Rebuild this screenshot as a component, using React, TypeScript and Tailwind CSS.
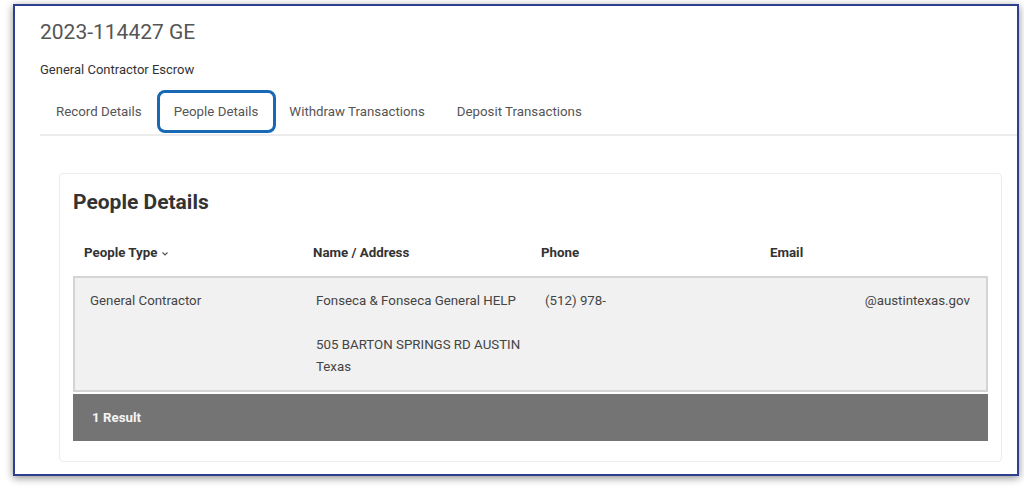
import React from 'react';

const tabs = ['Record Details', 'People Details', 'Withdraw Transactions', 'Deposit Transactions'];

export default function App() {
  return (
    <div className="w-[1024px] h-[488px] bg-white pt-[4px] pl-[13px] font-['Roboto',_'Liberation_Sans',_sans-serif]">
      {/* Framed screenshot */}
      <div className="w-[1006px] h-[472px] border-2 border-[#2e3f8f] bg-white shadow-[0_2px_8px_rgba(0,0,0,0.45)] flex flex-col">
        <div className="pl-[25px] pt-[12px]">
          <h1 className="text-[21px] leading-[28px] text-[#555] font-normal">2023-114427 GE</h1>
          <p className="mt-[16px] text-[13px] leading-[16px] text-[#333]">General Contractor Escrow</p>
        </div>

        {/* Tabs */}
        <div className="ml-[25px] mt-[10px] flex border-b-2 border-[#ececec] h-[48px] items-center pt-[2px]">
          {tabs.map((t, i) => (
            <div key={t} className={`relative h-full flex items-center text-[13.3px] text-[#555] ${i === 1 ? 'pl-[16px] pr-[15px]' : 'px-[16px]'}`}>
              {t}
              {i === 1 && (
                <div className="absolute left-[-1px] right-[-3px] top-[0px] bottom-[1px] border-[3px] border-[#1768b5] rounded-[8px]" />
              )}
            </div>
          ))}
        </div>

        {/* Card */}
        <div className="ml-[44px] mr-[15px] mt-[37px] border border-[#ececec] rounded-[4px] px-[13px] pb-[20px]">
          <h2 className="pt-[14px] text-[21px] leading-[28px] font-bold text-[#333]">People Details</h2>

          <div className="mt-[25px] grid grid-cols-[229px_228px_229px_1fr] pl-[11px] text-[13.3px] font-bold text-[#333] h-[24px] items-center">
            <div className="flex items-center gap-[4px]">
              People Type
              <svg width="8" height="6" viewBox="0 0 8 6" className="mt-[1px]">
                <path d="M1.5 1.5 L4 4 L6.5 1.5" fill="none" stroke="#555" strokeWidth="1.2" />
              </svg>
            </div>
            <div>Name / Address</div>
            <div>Phone</div>
            <div>Email</div>
          </div>

          <div className="mt-[11px] border-2 border-[#d4d4d4] bg-[#f1f1f1] grid grid-cols-[226px_229px_230px_1fr] pl-[15px] pr-[16px] pt-[12px] pb-[12px] text-[13.3px] leading-[22px] text-[#444]">
            <div>General Contractor</div>
            <div>
              <div>Fonseca &amp; Fonseca General HELP</div>
              <div className="mt-[22px]">505 BARTON SPRINGS RD AUSTIN</div>
              <div>Texas</div>
            </div>
            <div>(512) 978-</div>
            <div className="text-right">@austintexas.gov</div>
          </div>

          <div className="mt-[2px] h-[47px] bg-[#747474] flex items-center pl-[19px] text-[13.3px] font-bold text-[#f4f4f4]">
            1 Result
          </div>
        </div>
      </div>
    </div>
  );
}
